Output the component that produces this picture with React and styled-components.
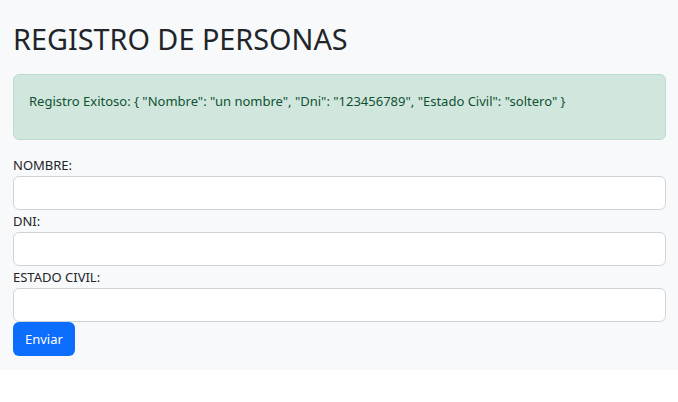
import React, { useState } from "react";
import styled, { createGlobalStyle } from "styled-components";

const GlobalStyle = createGlobalStyle`
  body {
    margin: 0;
    background: #ffffff;
    font-family: "Noto Sans", "Open Sans", sans-serif;
    color: #212529;
  }
`;

const Page = styled.div`
  background: #f8f9fa;
  padding: 0 12px 14px 13px;
  display: flex;
  flex-direction: column;
`;

const Title = styled.h1`
  margin: 0;
  padding: 20px 0 17px;
  font-size: 28.8px;
  font-weight: 400;
  line-height: 37px;
  color: #212529;
`;

const Alert = styled.div`
  background: #d1e7dd;
  border: 1px solid #badbcc;
  border-radius: 6px;
  color: #0f5132;
  font-size: 13px;
  line-height: 20px;
  padding: 16px 15px 28px;
  margin-bottom: 15px;
`;

const Form = styled.form`
  display: flex;
  flex-direction: column;
  align-items: flex-start;
`;

const Label = styled.label`
  font-size: 13px;
  line-height: 21px;
  color: #212529;
`;

const Input = styled.input`
  box-sizing: border-box;
  width: 100%;
  height: 34px;
  border: 1px solid #ced4da;
  border-radius: 6px;
  background: #ffffff;
  padding: 0 12px;
  font-family: inherit;
  font-size: 14px;
  margin-bottom: ${(p) => (p.$last ? "0" : "1px")};
  outline: none;
`;

const Button = styled.button`
  height: 34px;
  padding: 0 12px;
  border: none;
  border-radius: 6px;
  background: #0d6efd;
  color: #ffffff;
  font-family: inherit;
  font-size: 13px;
  cursor: pointer;
`;

const App = () => {
  const [nombre, setNombre] = useState("");
  const [dni, setDni] = useState("");
  const [estado, setEstado] = useState("");

  return (
    <>
      <GlobalStyle />
      <Page>
        <Title>REGISTRO DE PERSONAS</Title>
        <Alert>
          Registro Exitoso: {'{ "Nombre": "un nombre", "Dni": "123456789", "Estado Civil": "soltero" }'}
        </Alert>
        <Form onSubmit={(e) => e.preventDefault()}>
          <Label>NOMBRE:</Label>
          <Input value={nombre} onChange={(e) => setNombre(e.target.value)} />
          <Label>DNI:</Label>
          <Input value={dni} onChange={(e) => setDni(e.target.value)} />
          <Label>ESTADO CIVIL:</Label>
          <Input $last value={estado} onChange={(e) => setEstado(e.target.value)} />
          <Button type="submit">Enviar</Button>
        </Form>
      </Page>
    </>
  );
};

export default App;
